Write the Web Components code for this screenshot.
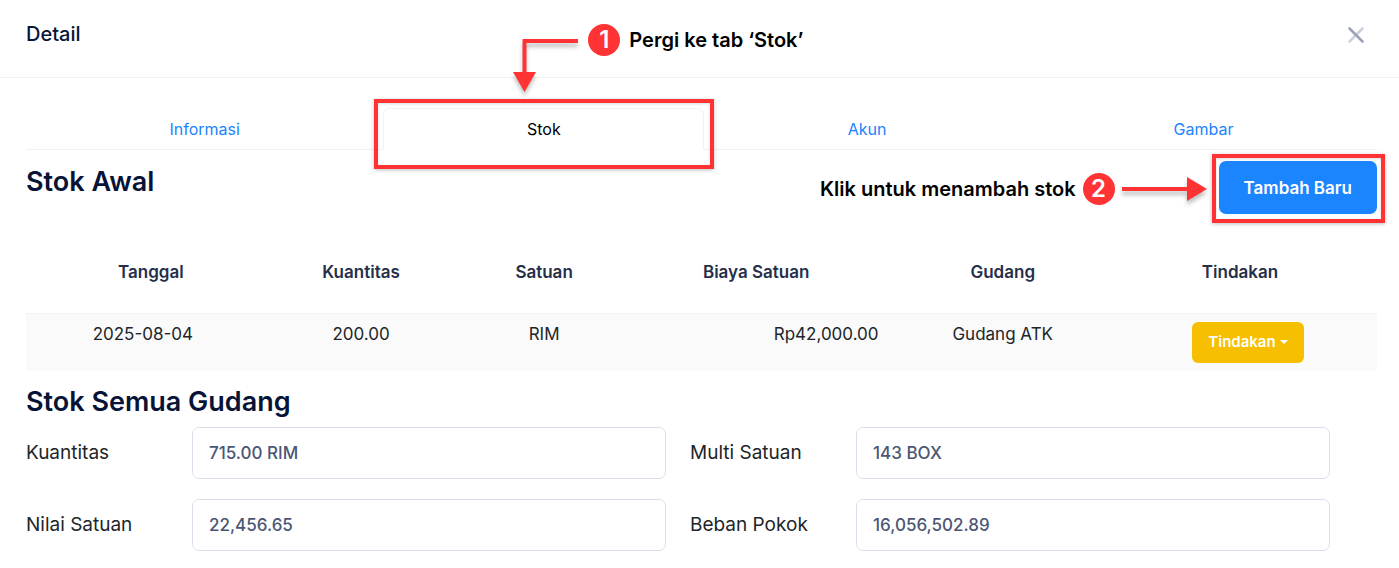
<!DOCTYPE html>
<html lang="id">
<head>
<meta charset="utf-8">
<meta name="viewport" content="width=device-width, initial-scale=1">
<title>Detail</title>
<style>
  body {
    margin: 0;
    background: #fff;
    color: #212529;
    font-family: Inter, "Liberation Sans", sans-serif;
    font-size: 17px;
    line-height: 24px;
  }
</style>
</head>
<body>
<stock-detail></stock-detail>

<script>
"use strict";

// dialog header with title and close button
class DialogHeader extends HTMLElement {
  constructor() {
    super();
    this.attachShadow({ mode: "open" }).innerHTML = /*html*/ `
      <style>
        :host {
          display: flex;
          align-items: center;
          justify-content: space-between;
          padding: 18px 32px 27px 26px;
          border-bottom: 1px solid #f1f1f4;
        }
        h1 {
          margin: 0;
          color: #071437;
          font-size: 20px;
          font-weight: 500;
          line-height: 32px;
        }
        button {
          display: flex;
          padding: 2px;
          border: 0;
          background: none;
          cursor: pointer;
        }
      </style>
      <h1><slot></slot></h1>
      <button type="button" aria-label="Tutup">
        <svg width="20" height="20" viewBox="0 0 20 20" fill="none" stroke-width="2.600" stroke-linecap="round">
          <path d="M17.500 4.500L4.500 17.500" stroke="#cdd1df"/>
          <path d="M4.500 4.500L17.500 17.500" stroke="#99a1b7"/>
        </svg>
      </button>
    `;
  }
}

// red rectangle drawn around its positioned parent
class CalloutFrame extends HTMLElement {
  constructor() {
    super();
    this.attachShadow({ mode: "open" }).innerHTML = /*html*/ `
      <style>
        :host {
          position: absolute;
          inset: var(--frame-inset, -7px -8px -9px -7px);
          box-sizing: border-box;
          border: 4px solid #ff3333;
          box-shadow: 0 1px 4px rgba(0, 0, 0, 0.25), inset 0 1px 3px rgba(0, 0, 0, 0.15);
          pointer-events: none;
        }
      </style>
      <slot></slot>
    `;
  }
}

// numbered red circle
class StepBadge extends HTMLElement {
  constructor() {
    super();
    this.attachShadow({ mode: "open" }).innerHTML = /*html*/ `
      <style>
        :host {
          display: flex;
          flex: none;
          align-items: center;
          justify-content: center;
          width: 32px;
          height: 32px;
          border-radius: 50%;
          background: #ff3333;
          color: #fff;
          font-size: 24px;
          font-weight: 600;
        }
      </style>
      <slot></slot>
    `;
  }
}

// badge + text + arrow
class StepNote extends HTMLElement {
  constructor() {
    super();
    this.attachShadow({ mode: "open" }).innerHTML = /*html*/ `
      <style>
        :host {
          display: flex;
          align-items: center;
          gap: 7px;
          color: #000;
          font-size: 20px;
          font-weight: 600;
          line-height: 32px;
          white-space: nowrap;
        }
        ::slotted(svg) {
          flex: none;
          overflow: visible;
          filter: drop-shadow(0 4px 2px rgba(0, 0, 0, 0.25));
        }
      </style>
      <slot></slot>
    `;
  }
}

class TabBar extends HTMLElement {
  constructor() {
    super();
    this.attachShadow({ mode: "open" }).innerHTML = /*html*/ `
      <style>
        :host {
          display: flex;
          border-bottom: 1px solid #f1f1f4;
        }
      </style>
      <slot></slot>
    `;
    this.setAttribute("role", "tablist");
  }
}

class TabItem extends HTMLElement {
  constructor() {
    super();
    this.attachShadow({ mode: "open" }).innerHTML = /*html*/ `
      <style>
        :host {
          display: block;
          position: relative;
          flex: 1 1 auto;
          margin-bottom: -1px;
        }
        a {
          display: block;
          padding: 8px 16px;
          border: 1px solid transparent;
          border-radius: 7px 7px 0 0;
          color: #1b84ff;
          font-size: 16px;
          text-align: center;
          text-decoration: none;
        }
        :host([active]) a {
          border-color: #f1f1f4 #f1f1f4 #fff;
          background: #fff;
          color: #000;
        }
      </style>
      <a href="#" role="tab"><slot></slot></a>
      <slot name="callout"></slot>
    `;
  }
}

class StockTable extends HTMLElement {
  constructor() {
    super();
    this.attachShadow({ mode: "open" }).innerHTML = /*html*/ `
      <style>
        :host {
          display: block;
        }
        table {
          width: 100%;
          border-collapse: collapse;
          table-layout: fixed;
        }
        th, td {
          padding: 8px;
          text-align: center;
          vertical-align: top;
        }
        th {
          padding: 29px 8px;
          color: #252f4a;
          font-size: 17px;
          font-weight: 600;
        }
        th:first-child {
          padding-left: 24px;
        }
        th:last-child {
          padding-right: 24px;
        }
        tbody tr {
          border-top: 1px solid #f1f1f4;
          background: #fafafa;
        }
        td.amount {
          text-align: right;
        }
        button {
          display: inline-flex;
          align-items: center;
          gap: 4px;
          padding: 9px 16px 10px;
          border: 0;
          border-radius: 6px;
          background: #f6c000;
          color: #fff;
          font: 600 15px/22px Inter, "Liberation Sans", sans-serif;
          vertical-align: top;
          cursor: pointer;
        }
        button::after {
          content: "";
          border: 4px solid transparent;
          border-top-color: currentColor;
          border-bottom: 0;
        }
      </style>
      <table>
        <colgroup>
          <col style="width: 17.3%">
          <col style="width: 15%">
          <col style="width: 12.1%">
          <col style="width: 19.3%">
          <col style="width: 17.2%">
          <col style="width: 19.1%">
        </colgroup>
        <thead>
          <tr>
            <th>Tanggal</th>
            <th>Kuantitas</th>
            <th>Satuan</th>
            <th>Biaya Satuan</th>
            <th>Gudang</th>
            <th>Tindakan</th>
          </tr>
        </thead>
        <tbody>
          <tr>
            <td>2025-08-04</td>
            <td>200.00</td>
            <td>RIM</td>
            <td class="amount">Rp42,000.00</td>
            <td>Gudang ATK</td>
            <td><button type="button" aria-haspopup="true">Tindakan</button></td>
          </tr>
        </tbody>
      </table>
    `;
  }
}

class StockSummary extends HTMLElement {
  constructor() {
    super();
    this.attachShadow({ mode: "open" }).innerHTML = /*html*/ `
      <style>
        :host {
          display: grid;
          grid-template-columns: 142fr 474fr 142fr 474fr;
          gap: 20px 24px;
          align-items: center;
          padding-right: 47px;
        }
        label {
          font-size: 19px;
          white-space: nowrap;
        }
        input {
          box-sizing: border-box;
          width: 100%;
          height: 52px;
          padding: 0 16px;
          border: 1px solid #dbdfe9;
          border-radius: 7px;
          background: #fff;
          color: #4b5675;
          font: 500 17px/24px Inter, "Liberation Sans", sans-serif;
        }
      </style>
      <label for="qty">Kuantitas</label>
      <input id="qty" type="text" value="715.00 RIM" readonly>
      <label for="multi">Multi Satuan</label>
      <input id="multi" type="text" value="143 BOX" readonly>
      <label for="value">Nilai Satuan</label>
      <input id="value" type="text" value="22,456.65" readonly>
      <label for="cost">Beban Pokok</label>
      <input id="cost" type="text" value="16,056,502.89" readonly>
    `;
  }
}

class StockDetail extends HTMLElement {
  constructor() {
    super();
    this.attachShadow({ mode: "open" }).innerHTML = /*html*/ `
      <style>
        :host {
          display: block;
        }
        main {
          padding: 30px 22px 17px 26px;
        }
        h2 {
          margin: 0;
          color: #071437;
          font-size: 27px;
          font-weight: 600;
          line-height: 34px;
        }
        .toolbar {
          display: flex;
          align-items: flex-start;
          margin-top: 11px;
          gap: 12px;
        }
        .toolbar h2 {
          margin-top: 4px;
        }
        .toolbar step-note {
          margin: 12px 0 0 auto;
        }
        .primary {
          position: relative;
        }
        .primary button {
          padding: 15px 25px 14px;
          border: 0;
          border-radius: 7px;
          background: #1b84ff;
          color: #fff;
          font: 600 17px/24px Inter, "Liberation Sans", sans-serif;
          cursor: pointer;
        }
        stock-table {
          margin: 17px 0 14px;
        }
        stock-summary {
          margin-top: 8px;
        }
        .tab-frame {
          --frame-inset: -9px -10px -19px -9px;
        }
        .tab-frame step-note {
          position: absolute;
          bottom: calc(100% + 11px);
          left: calc(50% - 31px);
          align-items: flex-start;
          gap: 9px;
        }
        .tab-frame svg {
          margin-top: 15px;
        }
      </style>
      <dialog-header>Detail</dialog-header>
      <main>
        <tab-bar>
          <tab-item>Informasi</tab-item>
          <tab-item active>
            Stok
            <callout-frame slot="callout" class="tab-frame">
              <step-note>
                <svg width="66" height="53" viewBox="0 0 66 53" aria-hidden="true">
                  <path d="M65 2H11.500V34" fill="none" stroke="#ff3333" stroke-width="4"/>
                  <path d="M0 33H23L11.500 53Z" fill="#ff3333"/>
                </svg>
                <step-badge>1</step-badge>
                <span>Pergi ke tab ‘Stok’</span>
              </step-note>
            </callout-frame>
          </tab-item>
          <tab-item>Akun</tab-item>
          <tab-item>Gambar</tab-item>
        </tab-bar>
        <div class="toolbar">
          <h2>Stok Awal</h2>
          <step-note>
            <span>Klik untuk menambah stok</span>
            <step-badge>2</step-badge>
            <svg width="85" height="24" viewBox="0 0 85 24" aria-hidden="true">
              <path d="M0 12H66" stroke="#ff3333" stroke-width="4"/>
              <path d="M65 0V24L85 12Z" fill="#ff3333"/>
            </svg>
          </step-note>
          <div class="primary">
            <button type="button">Tambah Baru</button>
            <callout-frame></callout-frame>
          </div>
        </div>
        <stock-table></stock-table>
        <h2>Stok Semua Gudang</h2>
        <stock-summary></stock-summary>
      </main>
    `;
  }
}

customElements.define("dialog-header", DialogHeader);
customElements.define("callout-frame", CalloutFrame);
customElements.define("step-badge", StepBadge);
customElements.define("step-note", StepNote);
customElements.define("tab-bar", TabBar);
customElements.define("tab-item", TabItem);
customElements.define("stock-table", StockTable);
customElements.define("stock-summary", StockSummary);
customElements.define("stock-detail", StockDetail);
</script>
</body>
</html>
